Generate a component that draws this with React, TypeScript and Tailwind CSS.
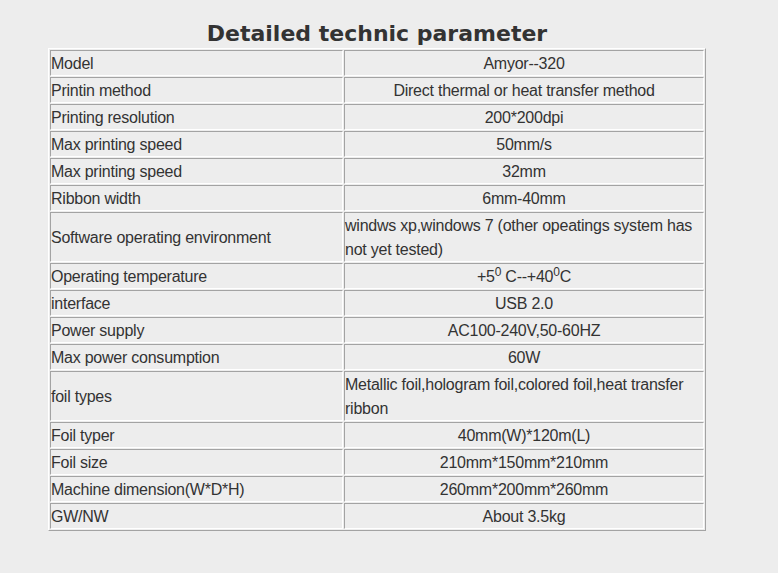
import React from 'react';

type Row = { label: string; value: React.ReactNode; left?: boolean };

const rows: Row[] = [
  { label: 'Model', value: 'Amyor--320' },
  { label: 'Printin method', value: 'Direct thermal or heat transfer method' },
  { label: 'Printing resolution', value: '200*200dpi' },
  { label: 'Max printing speed', value: '50mm/s' },
  { label: 'Max printing speed', value: '32mm' },
  { label: 'Ribbon width', value: '6mm-40mm' },
  {
    label: 'Software operating environment',
    value: 'windws xp,windows 7 (other opeatings system has not yet tested)',
    left: true,
  },
  {
    label: 'Operating temperature',
    value: (
      <>
        +5<sup className="text-[12px]">0</sup> C--+40<sup className="text-[12px]">0</sup>C
      </>
    ),
  },
  { label: 'interface', value: 'USB 2.0' },
  { label: 'Power supply', value: 'AC100-240V,50-60HZ' },
  { label: 'Max power consumption', value: '60W' },
  {
    label: 'foil types',
    value: 'Metallic foil,hologram foil,colored foil,heat transfer ribbon',
    left: true,
  },
  { label: 'Foil typer', value: '40mm(W)*120m(L)' },
  { label: 'Foil size', value: '210mm*150mm*210mm' },
  { label: 'Machine dimension(W*D*H)', value: '260mm*200mm*260mm' },
  { label: 'GW/NW', value: 'About 3.5kg' },
];

const cell =
  'border border-t-[#a3a3a3] border-l-[#a3a3a3] border-b-white border-r-white p-0 align-middle';

export default function App() {
  return (
    <div className="min-h-[573px] bg-[#ededed] text-[#333]">
      <div className="ml-[48px] w-[658px] pt-[20px]">
        <h2
          className="text-center text-[22px] font-bold leading-[28px] text-[#333]"
          style={{ fontFamily: '"DejaVu Sans", Verdana, sans-serif' }}
        >
          Detailed technic parameter
        </h2>
        <table
          className="w-[658px] table-fixed border-separate border-spacing-[1px] border border-t-white border-l-white border-r-[#a3a3a3] border-b-[#a3a3a3] text-[16px] leading-[24px] tracking-[-0.24px]"
          style={{ fontFamily: '"Liberation Sans", Arial, sans-serif' }}
        >
          <colgroup>
            <col className="w-[293px]" />
            <col />
          </colgroup>
          <tbody>
            {rows.map((r, i) => (
              <tr key={i}>
                <td className={`${cell} text-left`}>
                  <span className="relative top-px">{r.label}</span>
                </td>
                <td className={`${cell} ${r.left ? 'text-left' : 'text-center'}`}>
                  <span className="relative top-px">{r.value}</span>
                </td>
              </tr>
            ))}
          </tbody>
        </table>
      </div>
    </div>
  );
}
